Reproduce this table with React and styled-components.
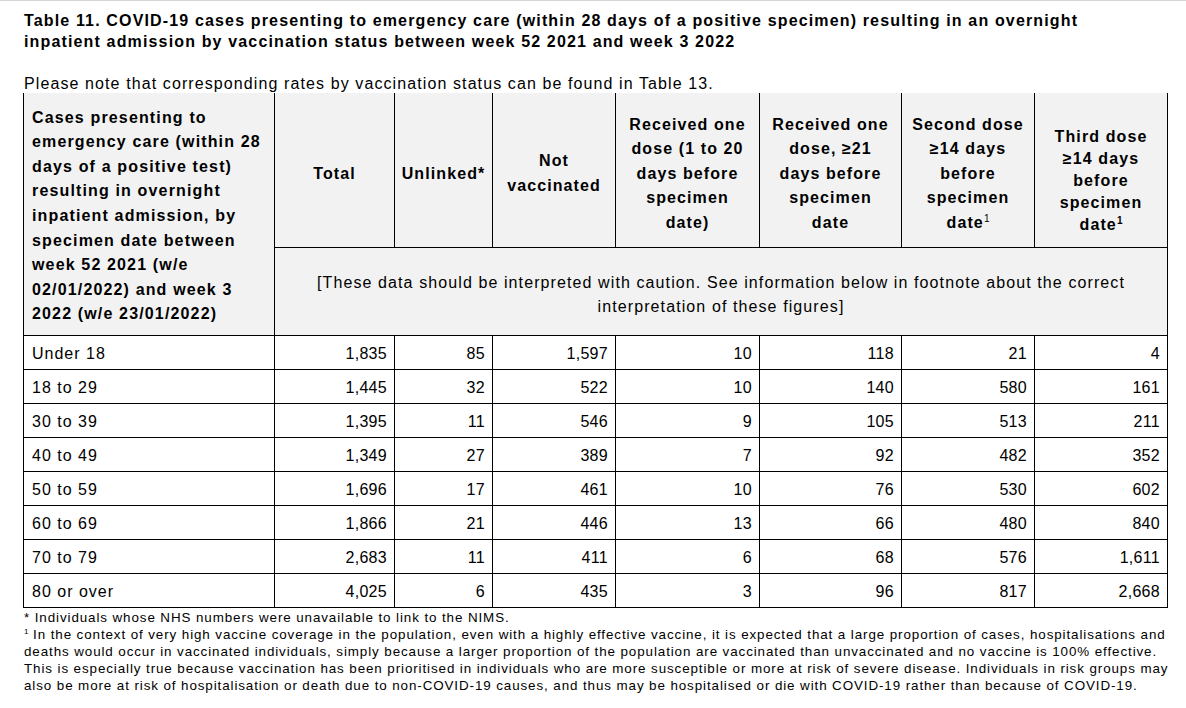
import React from 'react'
import styled, { createGlobalStyle } from 'styled-components'

const Global = createGlobalStyle`
  html, body { margin: 0; padding: 0; background: #fff; }
  body { font-family: "Liberation Sans", Arial, sans-serif; color: #000; }
`

const Page = styled.div`
  width: 1186px;
  height: 708px;
  box-sizing: border-box;
  border-top: 1px solid #d4d4d4;
  padding: 9px 0 0 24px;
  overflow: hidden;
`

const Title = styled.h1`
  margin: 0;
  font-size: 16px;
  line-height: 21px;
  font-weight: bold;
  letter-spacing: 1.15px;
  width: 1100px;
`

const Note = styled.p`
  margin: 23px 0 0;
  font-size: 16px;
  line-height: 18px;
  letter-spacing: 1.1px;
`

const Table = styled.table`
  margin-left: -1px;
  border-collapse: collapse;
  table-layout: fixed;
  width: 1144px;
  font-size: 16px;
`

const Head = styled.th`
  background: #f2f2f2;
  border: 1px solid #000;
  border-top: none;
  font-weight: bold;
  letter-spacing: 1.1px;
  text-align: center;
  vertical-align: middle;
  padding: ${p => p.$pt || 8}px 2px 0;
  line-height: ${p => p.$lh || 24.5}px;
  height: 154px;
  box-sizing: border-box;
`

const RowLabel = styled.th`
  background: #f2f2f2;
  border: 1px solid #000;
  border-top: none;
  font-weight: bold;
  letter-spacing: 1.15px;
  text-align: left;
  vertical-align: middle;
  padding: 5px 6px 0 8px;
  line-height: 24.6px;
`

const Caution = styled.td`
  background: #f2f2f2;
  border: 1px solid #000;
  text-align: center;
  letter-spacing: 1.1px;
  padding: 7px 30px 0;
  line-height: 24px;
  height: 88px;
  box-sizing: border-box;
`

const Cell = styled.td`
  border: 1px solid #000;
  height: 34px;
  box-sizing: border-box;
  padding: 3px 7px 0;
  text-align: ${p => (p.$left ? 'left' : 'right')};
  padding-left: ${p => (p.$left ? '8px' : '7px')};
  letter-spacing: ${p => (p.$left ? '1px' : '0.3px')};
`

const Sup = styled.sup`
  font-size: ${p => (p.$small ? 8 : 10)}px;
  line-height: 0;
  letter-spacing: 0;
  font-weight: ${p => (p.$bold ? 'bold' : 'normal')};
`

const Footnotes = styled.div`
  font-size: 13.4px;
  line-height: 17.2px;
  letter-spacing: 0.9px;
  margin-top: 1px;
`

const FootLine = styled.div`
  white-space: nowrap;
`

const widths = [251, 120, 98, 123, 144, 142, 133, 133]

const heads = [
  { lines: ['Total'] },
  { lines: ['Unlinked*'] },
  { lines: ['Not', 'vaccinated'] },
  { lines: ['Received one', 'dose (1 to 20', 'days before', 'specimen', 'date)'] },
  { lines: ['Received one', 'dose, ≥21', 'days before', 'specimen', 'date'] },
  { lines: ['Second dose', '≥14 days', 'before', 'specimen', 'date'], sup: 'thin' },
  { lines: ['Third dose', '≥14 days', 'before', 'specimen', 'date'], sup: 'bold', lh: 22, pt: 22 },
]

const rows = [
  ['Under 18', '1,835', '85', '1,597', '10', '118', '21', '4'],
  ['18 to 29', '1,445', '32', '522', '10', '140', '580', '161'],
  ['30 to 39', '1,395', '11', '546', '9', '105', '513', '211'],
  ['40 to 49', '1,349', '27', '389', '7', '92', '482', '352'],
  ['50 to 59', '1,696', '17', '461', '10', '76', '530', '602'],
  ['60 to 69', '1,866', '21', '446', '13', '66', '480', '840'],
  ['70 to 79', '2,683', '11', '411', '6', '68', '576', '1,611'],
  ['80 or over', '4,025', '6', '435', '3', '96', '817', '2,668'],
]

const notes = [
  'deaths would occur in vaccinated individuals, simply because a larger proportion of the population are vaccinated than unvaccinated and no vaccine is 100% effective.',
  'This is especially true because vaccination has been prioritised in individuals who are more susceptible or more at risk of severe disease. Individuals in risk groups may',
  'also be more at risk of hospitalisation or death due to non-COVID-19 causes, and thus may be hospitalised or die with COVID-19 rather than because of COVID-19.',
]

export default function App() {
  return (
    <Page>
      <Global />
      <Title>
        Table 11. COVID-19 cases presenting to emergency care (within 28 days of a positive specimen) resulting in an overnight
        inpatient admission by vaccination status between week 52 2021 and week 3 2022
      </Title>
      <Note>Please note that corresponding rates by vaccination status can be found in Table 13.</Note>
      <Table>
        <colgroup>
          {widths.map((w, i) => <col key={i} style={{ width: w }} />)}
        </colgroup>
        <thead>
          <tr>
            <RowLabel rowSpan={2}>
              Cases presenting to emergency care (within 28 days of a positive test) resulting in overnight inpatient admission, by specimen date between week 52 2021 (w/e 02/01/2022) and week 3 2022 (w/e 23/01/2022)
            </RowLabel>
            {heads.map((h, i) => (
              <Head key={i} $lh={h.lh} $pt={h.pt}>
                {h.lines.map((l, j) => (
                  <React.Fragment key={j}>
                    {j > 0 && <br />}
                    {l}
                  </React.Fragment>
                ))}
                {h.sup && <Sup $bold={h.sup === 'bold'}>1</Sup>}
              </Head>
            ))}
          </tr>
          <tr>
            <Caution colSpan={7}>
              [These data should be interpreted with caution. See information below in footnote about the correct interpretation of these figures]
            </Caution>
          </tr>
        </thead>
        <tbody>
          {rows.map(r => (
            <tr key={r[0]}>
              {r.map((v, i) => <Cell key={i} $left={i === 0}>{v}</Cell>)}
            </tr>
          ))}
        </tbody>
      </Table>
      <Footnotes>
        <FootLine>* Individuals whose NHS numbers were unavailable to link to the NIMS.</FootLine>
        <FootLine>
          <Sup $small>1</Sup> In the context of very high vaccine coverage in the population, even with a highly effective vaccine, it is expected that a large proportion of cases, hospitalisations and
        </FootLine>
        {notes.map((n, i) => <FootLine key={i}>{n}</FootLine>)}
      </Footnotes>
    </Page>
  )
}
